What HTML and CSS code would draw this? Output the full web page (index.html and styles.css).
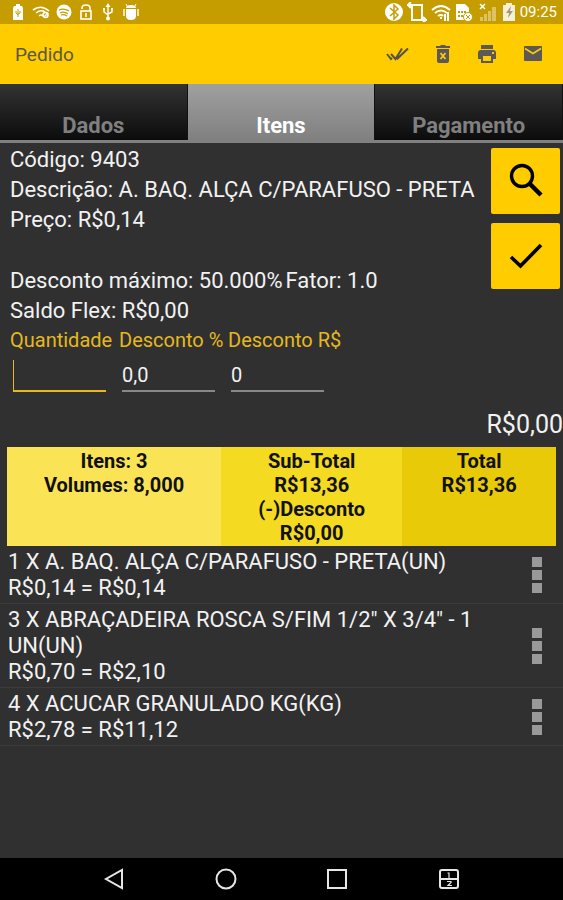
FILE: index.html
```html
<!DOCTYPE html>
<html lang="pt-BR">
<head>
  <meta charset="UTF-8">
  <meta name="viewport" content="width=device-width, initial-scale=1.0">
  <title>Pedido</title>
  <link rel="stylesheet" href="styles.css">
</head>
<body>
  <div class="status-bar">
    <div class="status-group status-left">
      <svg width="16" height="18" viewBox="0 0 16 18"><path d="M6 1h4v2h2l1 2v12H3V5l1-2h2z" fill="#fff"/><path d="M8 6v8M6 8v2l2 2M10 8v2l-2 1" stroke="#c59d00" fill="none"/></svg>
      <svg width="18" height="18" viewBox="0 0 18 18" fill="none" stroke="#fff" stroke-width="1.600"><path d="M1 7q8-6 16 1M4 10q5-4 9-1M7 13q2-2 4 0"/><circle cx="13.500" cy="12" r="2.500"/><path d="M12 14l4-4"/></svg>
      <svg width="16" height="18" viewBox="0 0 16 18"><circle cx="8" cy="9" r="7.500" fill="#fff"/><path d="M3 7q5-2 10 1M4 10q4-2 8 1M5 12q3-1 6 1" stroke="#c59d00" fill="none" stroke-width="1.300"/></svg>
      <svg width="16" height="18" viewBox="0 0 16 18" fill="none" stroke="#fff" stroke-width="1.600"><path d="M4 6V5q0-3 4-3t4 3v3"/><rect x="3" y="8" width="10" height="8"/><path d="M8 10v4"/></svg>
      <svg width="16" height="18" viewBox="0 0 16 18" fill="none" stroke="#fff" stroke-width="1.400"><path d="M8 3v12M4 6v3l4 3M12 6v3l-4 2"/><path d="M8 0l2.500 4h-5z" fill="#fff" stroke="none"/><circle cx="8" cy="15.500" r="2" fill="#fff" stroke="none"/><path d="M3 5h2v2H3zM11 5h2v2h-2z" fill="#fff" stroke="none"/></svg>
      <svg width="18" height="18" viewBox="0 0 18 18" fill="#fff"><path d="M4 5q0-3 5-3t5 3zM4 6h10v7q0 4-5 4t-5-4z"/><path d="M1 6h2v7H1zM15 6h2v7h-2z" opacity=".7"/><path d="M5 3L4 1M13 3l1-2" stroke="#fff"/></svg>
    </div>
    <div class="status-group status-right">
      <svg width="18" height="20" viewBox="0 0 18 20"><circle cx="9" cy="10" r="9" fill="#fff"/><path d="M5 6l8 7-4 4V3l4 4-8 7" stroke="#c59d00" stroke-width="1.500" fill="none"/></svg>
      <svg width="20" height="20" viewBox="0 0 20 20" fill="none" stroke="#fff" stroke-width="2"><rect x="5" y="3" width="10" height="15"/><path d="M0 3h6M4 0L1 3l3 3M14 18h6M16 15l3 3-3 2"/></svg>
      <svg width="20" height="20" viewBox="0 0 20 20" fill="none" stroke="#fff" stroke-width="2"><path d="M1 8q9-8 18 0M4 11q6-5 12 0M7 14q3-2 5 0"/><path d="M9 16h2M14 19v-7M17 19v-9"/></svg>
      <svg width="19" height="20" viewBox="0 0 19 20"><path d="M1 2h9l4 4v12H1z" fill="#fff"/><path d="M3 9h2v2H3zM6 9h2v2H6zM9 9h2v2H9zM3 13h2v2H3zM6 13h2v2H6z" fill="#c59d00"/><circle cx="13" cy="15" r="4.500" fill="#fff" stroke="#c59d00"/><path d="M11 13l4 4M15 13l-4 4" stroke="#c59d00"/></svg>
      <svg width="20" height="20" viewBox="0 0 20 20"><path d="M2 19v-4h3v4zM6 19v-7h3v7zM10 19V9h3v10zM14 19V5h4v14z" fill="#fff" opacity=".4"/><path d="M2 2l5 5M7 2L2 7" stroke="#fff" stroke-width="1.500"/></svg>
      <svg width="14" height="20" viewBox="0 0 14 20"><path d="M4 1h6v2h3v16H1V3h3z" fill="#fff" opacity=".85"/><path d="M9 4l-5 7h3l-1 5 5-7H8z" fill="#a79a72"/></svg>
      <span class="clock">09:25</span>
    </div>
  </div>

  <header class="app-bar">
    <h1>Pedido</h1>
    <div class="actions">
      <button type="button" aria-label="Confirmar">
        <svg width="24" height="20" viewBox="0 0 24 20" fill="none" stroke="#555245" stroke-width="2"><path d="M2 10l4 5 1-1M6 10l4.500 5L17 4.500M11 13l1.500 1.500L23 4.500"/></svg>
      </button>
      <button type="button" aria-label="Excluir">
        <svg width="16" height="20" viewBox="0 0 16 20"><path d="M1 2h4l1-1h4l1 1h4v2H1zM2 5h12v12q0 2-2 2H4q-2 0-2-2z" fill="#5c5858"/><path d="M5.500 9l5 6M10.500 9l-5 6" stroke="#ffcc00" stroke-width="1.800"/></svg>
      </button>
      <button type="button" aria-label="Imprimir">
        <svg width="20" height="20" viewBox="0 0 20 20"><path d="M4 1h12v4H4zM4 6h12q3 0 3 3v6h-3v4H4v-4H1V9q0-3 3-3z" fill="#5c5858"/><path d="M6 12h8v5H6z" fill="#ffcc00"/><path d="M15 8h2v2h-2z" fill="#ffcc00"/></svg>
      </button>
      <button type="button" aria-label="Enviar por e-mail">
        <svg width="20" height="20" viewBox="0 0 20 20"><rect x="1" y="2" width="18" height="15" rx="1" fill="#5c5858"/><path d="M2 4.500l8 5 8-5" stroke="#ffcc00" stroke-width="1.600" fill="none"/></svg>
      </button>
    </div>
  </header>

  <nav class="tabs" role="tablist">
    <button type="button" role="tab" aria-selected="false">Dados</button>
    <button type="button" role="tab" aria-selected="true" class="active">Itens</button>
    <button type="button" role="tab" aria-selected="false">Pagamento</button>
  </nav>

  <main>
    <form class="product">
      <div class="product-info">
        <p>Código: 9403</p>
        <p>Descrição: A. BAQ. ALÇA C/PARAFUSO - PRETA</p>
        <p class="price">Preço: R$0,14</p>
        <p class="discount"><span>Desconto máximo: 50.000%</span><span>Fator: 1.0</span></p>
        <p>Saldo Flex: R$0,00</p>
        <div class="fields">
          <div class="field">
            <label for="quantidade">Quantidade</label>
            <input type="text" id="quantidade" class="focused">
          </div>
          <div class="field">
            <label for="descontoPct">Desconto %</label>
            <input type="text" id="descontoPct" value="0,0">
          </div>
          <div class="field">
            <label for="descontoValor">Desconto R$</label>
            <input type="text" id="descontoValor" value="0">
          </div>
        </div>
      </div>
      <div class="product-buttons">
        <button type="button" aria-label="Pesquisar">
          <svg width="36" height="36" viewBox="0 0 36 36" fill="none" stroke="#000"><circle cx="14" cy="13" r="10.500" stroke-width="3.400"/><path d="M22 21l11 11" stroke-width="4.500"/></svg>
        </button>
        <button type="button" aria-label="Adicionar item">
          <svg width="36" height="36" viewBox="0 0 36 36" fill="none" stroke="#000" stroke-width="3.600"><path d="M3 19l9.500 9L33 7"/></svg>
        </button>
      </div>
    </form>

    <p class="item-total">R$0,00</p>

    <table class="summary">
      <tr>
        <td class="count">Itens: 3<br>Volumes: 8,000</td>
        <td class="subtotal">Sub-Total<br>R$13,36<br>(-)Desconto<br>R$0,00</td>
        <td class="total">Total<br>R$13,36</td>
      </tr>
    </table>

    <ul class="items">
      <li>
        <div class="item-text">1 X A. BAQ. ALÇA C/PARAFUSO - PRETA(UN)<br>R$0,14 = R$0,14</div>
        <button type="button" class="more" aria-label="Opções"><i></i><i></i><i></i></button>
      </li>
      <li>
        <div class="item-text">3 X ABRAÇADEIRA ROSCA S/FIM 1/2" X 3/4" - 1 UN(UN)<br>R$0,70 = R$2,10</div>
        <button type="button" class="more" aria-label="Opções"><i></i><i></i><i></i></button>
      </li>
      <li>
        <div class="item-text">4 X ACUCAR GRANULADO KG(KG)<br>R$2,78 = R$11,12</div>
        <button type="button" class="more" aria-label="Opções"><i></i><i></i><i></i></button>
      </li>
    </ul>
  </main>

  <footer class="nav-bar">
    <button type="button" aria-label="Voltar">
      <svg width="22" height="22" viewBox="0 0 22 22" fill="none" stroke="#e6e6e6" stroke-width="2"><path d="M19 2v18L3 11z"/></svg>
    </button>
    <button type="button" aria-label="Início">
      <svg width="22" height="22" viewBox="0 0 22 22" fill="none" stroke="#e6e6e6" stroke-width="2"><circle cx="11" cy="11" r="9.500"/></svg>
    </button>
    <button type="button" aria-label="Recentes">
      <svg width="22" height="22" viewBox="0 0 22 22" fill="none" stroke="#e6e6e6" stroke-width="2"><rect x="2" y="2" width="18" height="18"/></svg>
    </button>
    <button type="button" aria-label="Dividir tela">
      <svg width="22" height="22" viewBox="0 0 22 22" fill="none" stroke="#e6e6e6" stroke-width="2"><rect x="2" y="2" width="18" height="18" rx="2"/><path d="M2 11h18"/><path d="M9.500 5H11v5M9 13.500h4v1l-3 3h4" stroke-width="1.200"/></svg>
    </button>
  </footer>
</body>
</html>
```

FILE: styles.css
```css
* {
  box-sizing: border-box;
}

body {
  margin: 0;
  min-height: 100vh;
  display: flex;
  flex-direction: column;
  background-color: #303030;
  color: #f2f2f2;
  font-family: Roboto, "Liberation Sans", sans-serif;
  font-size: 22px;
}

button {
  border: none;
  padding: 0;
  background: none;
  font-family: inherit;
  cursor: pointer;
}

svg {
  display: block;
}

p,
h1 {
  margin: 0;
}

/* status bar */
.status-bar {
  display: flex;
  justify-content: space-between;
  align-items: center;
  height: 24px;
  padding: 0 6px 0 10px;
  background-color: #c59d00;
}

.status-group {
  display: flex;
  align-items: center;
}

.status-left {
  gap: 6px;
}

.status-right {
  gap: 4px;
}

.clock {
  color: #fff;
  font-size: 15px;
}

/* app bar */
.app-bar {
  display: flex;
  justify-content: space-between;
  align-items: center;
  height: 60px;
  padding: 0 20px 0 15px;
  background-color: #ffcc00;
}

.app-bar h1 {
  color: #5c5840;
  font-size: 19px;
  font-weight: 400;
}

.actions {
  display: flex;
  gap: 26px;
}

/* tabs */
.tabs {
  display: grid;
  grid-template-columns: repeat(3, 1fr);
  height: 59px;
  border-bottom: 3px solid #808080;
}

.tabs button {
  padding-top: 26px;
  border-right: 1px solid #111;
  background: linear-gradient(#333, #0c0c0c);
  color: #808080;
  font-size: 22px;
  font-weight: 700;
}

.tabs .active {
  background: linear-gradient(#a0a0a0, #808080);
  color: #fff;
}

main {
  flex: 1;
}

/* product form */
.product {
  display: flex;
  justify-content: space-between;
  padding: 2px 3px 0 10px;
}

.product-info {
  line-height: 30px;
  white-space: nowrap;
}

.price {
  margin-bottom: 31px;
}

.discount {
  display: flex;
  gap: 3px;
}

.fields {
  display: flex;
}

.field {
  width: 109px;
}

.field label {
  display: block;
  color: #e6b81e;
  font-size: 20px;
  line-height: 28px;
}

.field input {
  display: block;
  width: 93px;
  height: 32px;
  margin: 6px 3px 0;
  padding: 0;
  border: none;
  border-bottom: 2px solid #888;
  outline: none;
  background: none;
  color: #f2f2f2;
  font-family: inherit;
  font-size: 20px;
}

.field .focused {
  border-bottom-color: #e6b81e;
  background: linear-gradient(#e6b81e, #e6b81e) no-repeat left / 1px 100%;
}

.product-buttons {
  display: flex;
  flex-direction: column;
  gap: 9px;
  padding-top: 3px;
}

.product-buttons button {
  display: flex;
  justify-content: center;
  align-items: center;
  width: 69px;
  height: 66px;
  border-radius: 2px;
  background-color: #ffcc00;
}

.item-total {
  margin-top: 18px;
  font-size: 25px;
  line-height: 30px;
  text-align: right;
}

/* totals */
.summary {
  width: calc(100% - 14px);
  margin: 7px 7px 0;
  border-collapse: collapse;
  table-layout: fixed;
  color: #111;
  font-size: 20px;
  font-weight: 700;
  line-height: 24px;
  text-align: center;
}

.summary td {
  padding: 2px 0 1px;
  vertical-align: top;
}

.count {
  width: 39%;
  background-color: #fae455;
}

.subtotal {
  width: 33%;
  background-color: #f4da20;
}

.total {
  background-color: #e8ca08;
}

/* order items */
.items {
  margin: 0;
  padding: 0;
  list-style: none;
}

.items li {
  display: flex;
  justify-content: space-between;
  align-items: center;
  padding: 3px 21px 2px 8px;
  border-bottom: 1px solid #3c3c3c;
  line-height: 26px;
}

.item-text {
  max-width: 490px;
}

.more {
  display: flex;
  flex-direction: column;
  gap: 3px;
}

.more i {
  width: 10px;
  height: 10px;
  background-color: #999;
}

/* navigation bar */
.nav-bar {
  display: flex;
  justify-content: space-between;
  align-items: center;
  height: 42px;
  padding: 0 103px;
  background-color: #000;
}
```
